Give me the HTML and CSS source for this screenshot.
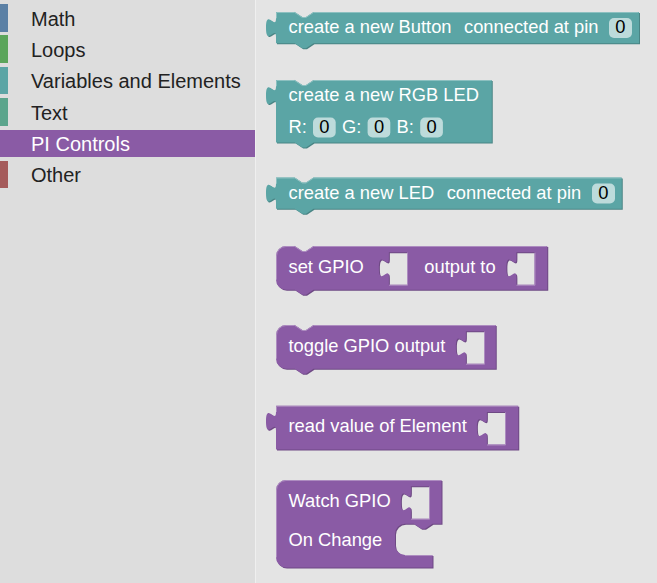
FILE: index.html
```
<!DOCTYPE html>
<html>
<head>
<meta charset="utf-8">
<title>Blockly toolbox</title>
<link rel="stylesheet" href="styles.css">
</head>
<body>
<div class="app">
  <div class="toolbox">
    <div class="cat cat-math">Math</div>
    <div class="cat cat-loops">Loops</div>
    <div class="cat cat-vars">Variables and Elements</div>
    <div class="cat cat-text">Text</div>
    <div class="cat cat-pi">PI Controls</div>
    <div class="cat cat-other">Other</div>
  </div>
  <div class="flyout">
    <svg class="block" width="379" height="44" viewBox="262 8 379 44">
      <path class="shape teal-d" transform="translate(1,1)" d="M276,12 H294.75 l7.5,5 3.75,0 7.5,-5 H639 V43.25 H313.5 l-7.5,5 -3.75,0 -7.5,-5 H276 V37 c0,-12.5 -10,10 -10,-9.375 s10,3.125 10,-9.375 Z"/>
      <path class="shape teal" d="M276,12 H294.75 l7.5,5 3.75,0 7.5,-5 H639 V43.25 H313.5 l-7.5,5 -3.75,0 -7.5,-5 H276 V37 c0,-12.5 -10,10 -10,-9.375 s10,3.125 10,-9.375 Z"/>
      <path class="light teal-l" d="M276.5,18.25 V12.5 H294.75 l7.5,5 3.75,0 7.5,-5 H638.5"/>
      <text class="t" x="288.5" y="33">create a new Button</text>
      <text class="t" x="464" y="33">connected at pin</text>
      <rect class="field" x="609" y="18" width="23" height="20" rx="5" ry="5"/>
      <text class="t t-val" x="615.3" y="33">0</text>
    </svg>

    <svg class="block" width="232" height="75" viewBox="262 75 232 75">
      <path class="shape teal-d" transform="translate(1,1)" d="M276,80 H294.75 l7.5,5 3.75,0 7.5,-5 H491.75 V142.5 H313.5 l-7.5,5 -3.75,0 -7.5,-5 H276 V105 c0,-12.5 -10,10 -10,-9.375 s10,3.125 10,-9.375 Z"/>
      <path class="shape teal" d="M276,80 H294.75 l7.5,5 3.75,0 7.5,-5 H491.75 V142.5 H313.5 l-7.5,5 -3.75,0 -7.5,-5 H276 V105 c0,-12.5 -10,10 -10,-9.375 s10,3.125 10,-9.375 Z"/>
      <path class="light teal-l" d="M276.5,86.25 V80.5 H294.75 l7.5,5 3.75,0 7.5,-5 H491.25"/>
      <text class="t" x="288.5" y="101">create a new RGB LED</text>
      <text class="t" x="288.5" y="132.5">R:</text>
      <rect class="field" x="313" y="117.5" width="22.7" height="20" rx="5" ry="5"/>
      <text class="t t-val" x="319.3" y="132.5">0</text>
      <text class="t" x="342" y="132.5">G:</text>
      <rect class="field" x="367.6" y="117.5" width="22.7" height="20" rx="5" ry="5"/>
      <text class="t t-val" x="373.9" y="132.5">0</text>
      <text class="t" x="396.6" y="132.5">B:</text>
      <rect class="field" x="420.2" y="117.5" width="22.7" height="20" rx="5" ry="5"/>
      <text class="t t-val" x="426.5" y="132.5">0</text>
    </svg>

    <svg class="block" width="362" height="45" viewBox="262 173 362 45">
      <path class="shape teal-d" transform="translate(1,1)" d="M276,177.5 H294.75 l7.5,5 3.75,0 7.5,-5 H621.75 V208.75 H313.5 l-7.5,5 -3.75,0 -7.5,-5 H276 V202.5 c0,-12.5 -10,10 -10,-9.375 s10,3.125 10,-9.375 Z"/>
      <path class="shape teal" d="M276,177.5 H294.75 l7.5,5 3.75,0 7.5,-5 H621.75 V208.75 H313.5 l-7.5,5 -3.75,0 -7.5,-5 H276 V202.5 c0,-12.5 -10,10 -10,-9.375 s10,3.125 10,-9.375 Z"/>
      <path class="light teal-l" d="M276.5,183.75 V178 H294.75 l7.5,5 3.75,0 7.5,-5 H621.25"/>
      <text class="t" x="288.5" y="198.5">create a new LED</text>
      <text class="t" x="446.7" y="198.5">connected at pin</text>
      <rect class="field" x="592" y="183.5" width="23" height="20" rx="5" ry="5"/>
      <text class="t t-val" x="598.3" y="198.5">0</text>
    </svg>

    <svg class="block" width="288" height="57" viewBox="262 241 288 57">
      <path class="shape purple-d" transform="translate(1,1)" d="M276,256 a10,10 0 0,1 10,-10 H294.75 l7.5,5 3.75,0 7.5,-5 H547.25 V289.75 H313.5 l-7.5,5 -3.75,0 -7.5,-5 H286 a10,10 0 0,1 -10,-10 Z M407,252.25 h-18.125 v6.25 c0,12.5 -10,-10 -10,9.375 s10,-3.125 10,9.375 v7.5 h18.125 Z M534.5,252.25 h-18.125 v6.25 c0,12.5 -10,-10 -10,9.375 s10,-3.125 10,9.375 v7.5 h18.125 Z"/>
      <path class="shape purple" d="M276,256 a10,10 0 0,1 10,-10 H294.75 l7.5,5 3.75,0 7.5,-5 H547.25 V289.75 H313.5 l-7.5,5 -3.75,0 -7.5,-5 H286 a10,10 0 0,1 -10,-10 Z M407,252.25 h-18.125 v6.25 c0,12.5 -10,-10 -10,9.375 s10,-3.125 10,9.375 v7.5 h18.125 Z M534.5,252.25 h-18.125 v6.25 c0,12.5 -10,-10 -10,9.375 s10,-3.125 10,9.375 v7.5 h18.125 Z"/>
      <path class="light purple-l" d="M276.5,279.75 V256 a9.5,9.5 0 0,1 9.5,-9.5 H294.75 l7.5,5 3.75,0 7.5,-5 H546.75 M407.5,252.75 V285.25 H389 M535,252.75 V285.25 H516.5"/>
      <text class="t" x="288.5" y="272.7">set GPIO</text>
      <text class="t" x="424.3" y="272.7">output to</text>
    </svg>

    <svg class="block" width="236" height="57" viewBox="262 321 236 57">
      <path class="shape purple-d" transform="translate(1,1)" d="M276,335 a10,10 0 0,1 10,-10 H294.75 l7.5,5 3.75,0 7.5,-5 H495.75 V368.75 H313.5 l-7.5,5 -3.75,0 -7.5,-5 H286 a10,10 0 0,1 -10,-10 Z M484,331.25 h-18.125 v6.25 c0,12.5 -10,-10 -10,9.375 s10,-3.125 10,9.375 v7.5 h18.125 Z"/>
      <path class="shape purple" d="M276,335 a10,10 0 0,1 10,-10 H294.75 l7.5,5 3.75,0 7.5,-5 H495.75 V368.75 H313.5 l-7.5,5 -3.75,0 -7.5,-5 H286 a10,10 0 0,1 -10,-10 Z M484,331.25 h-18.125 v6.25 c0,12.5 -10,-10 -10,9.375 s10,-3.125 10,9.375 v7.5 h18.125 Z"/>
      <path class="light purple-l" d="M276.5,358.75 V335 a9.5,9.5 0 0,1 9.5,-9.5 H294.75 l7.5,5 3.75,0 7.5,-5 H495.25 M484.5,331.75 V364.25 H466"/>
      <text class="t" x="288.5" y="351.7">toggle GPIO output</text>
    </svg>

    <svg class="block" width="259" height="52" viewBox="262 401 259 52">
      <path class="shape purple-d" transform="translate(1,1)" d="M276,405.75 H518.25 V449.5 H276 V430.75 c0,-12.5 -10,10 -10,-9.375 s10,3.125 10,-9.375 Z M505,412 h-18.125 v6.25 c0,12.5 -10,-10 -10,9.375 s10,-3.125 10,9.375 v7.5 h18.125 Z"/>
      <path class="shape purple" d="M276,405.75 H518.25 V449.5 H276 V430.75 c0,-12.5 -10,10 -10,-9.375 s10,3.125 10,-9.375 Z M505,412 h-18.125 v6.25 c0,12.5 -10,-10 -10,9.375 s10,-3.125 10,9.375 v7.5 h18.125 Z"/>
      <path class="light purple-l" d="M276.5,412 V406.25 H517.75 M505.5,412.5 V445 H487"/>
      <text class="t" x="288.5" y="432">read value of Element</text>
    </svg>

    <svg class="block" width="182" height="96" viewBox="262 476 182 96">
      <path class="shape purple-d" transform="translate(1,1)" d="M276,490 a10,10 0 0,1 10,-10 H441.5 V523.75 H432.5 l-7.5,5 -3.75,0 -7.5,-5 h-8.75 a10,10 0 0,0 -10,10 v11.25 a10,10 0 0,0 10,10 H432.5 V567.5 H286 a10,10 0 0,1 -10,-10 Z M429,486.25 h-18.125 v6.25 c0,12.5 -10,-10 -10,9.375 s10,-3.125 10,9.375 v7.5 h18.125 Z"/>
      <path class="shape purple" d="M276,490 a10,10 0 0,1 10,-10 H441.5 V523.75 H432.5 l-7.5,5 -3.75,0 -7.5,-5 h-8.75 a10,10 0 0,0 -10,10 v11.25 a10,10 0 0,0 10,10 H432.5 V567.5 H286 a10,10 0 0,1 -10,-10 Z M429,486.25 h-18.125 v6.25 c0,12.5 -10,-10 -10,9.375 s10,-3.125 10,9.375 v7.5 h18.125 Z"/>
      <path class="light purple-l" d="M276.5,557.5 V490 a9.5,9.5 0 0,1 9.5,-9.5 H441 M429.5,486.75 V519.25 H411 M405,555.5 H432"/>
      <text class="t" x="288.5" y="507">Watch GPIO</text>
      <text class="t" x="288.5" y="546">On Change</text>
    </svg>
  </div>
</div>
</body>
</html>
```

FILE: styles.css
```
* {
  box-sizing: border-box;
}

html,
body {
  margin: 0;
  height: 100%;
}

body {
  font-family: "Liberation Sans", Arial, sans-serif;
  background: #e4e4e4;
  overflow: hidden;
}

.app {
  display: flex;
  height: 100vh;
}

.toolbox {
  width: 255px;
  flex: none;
  background: #dddddd;
  padding-top: 4px;
}

.cat {
  height: 27.5px;
  margin-bottom: 3.9px;
  border-left: 8px solid transparent;
  padding: 2.5px 0 0 23px;
  line-height: 24.5px;
  font-size: 20px;
  color: #222222;
  white-space: nowrap;
}

.cat-math { border-left-color: #5b80a5; }
.cat-loops { border-left-color: #5ba55b; }
.cat-vars { border-left-color: #5ba5a5; }
.cat-text { border-left-color: #5ba58c; }
.cat-pi {
  border-left-color: #8a5ba5;
  background: #8a5ba5;
  color: #ffffff;
}
.cat-other { border-left-color: #a55b5b; }

.flyout {
  flex: 1;
  background: #e4e4e4;
  border-left: 1px solid #efefef;
  padding: 8px 0 0 6px;
  display: flex;
  flex-direction: column;
  align-items: flex-start;
  gap: 23px;
}

.block {
  display: block;
  flex: none;
  overflow: visible;
}

.shape { fill-rule: evenodd; }

.teal { fill: #5ba5a5; }
.teal-d { fill: #498484; }
.teal-l { stroke: #8cc0c0; }

.purple { fill: #8a5ba5; }
.purple-d { fill: #6e4984; }
.purple-l { stroke: #ad8cc0; }

.light {
  fill: none;
  stroke-width: 1;
}

.t {
  fill: #ffffff;
  font-family: "Liberation Sans", Arial, sans-serif;
  font-size: 18.33px;
}

.t-val { fill: #000000; }

.field {
  fill: #ffffff;
  fill-opacity: 0.6;
}
```
